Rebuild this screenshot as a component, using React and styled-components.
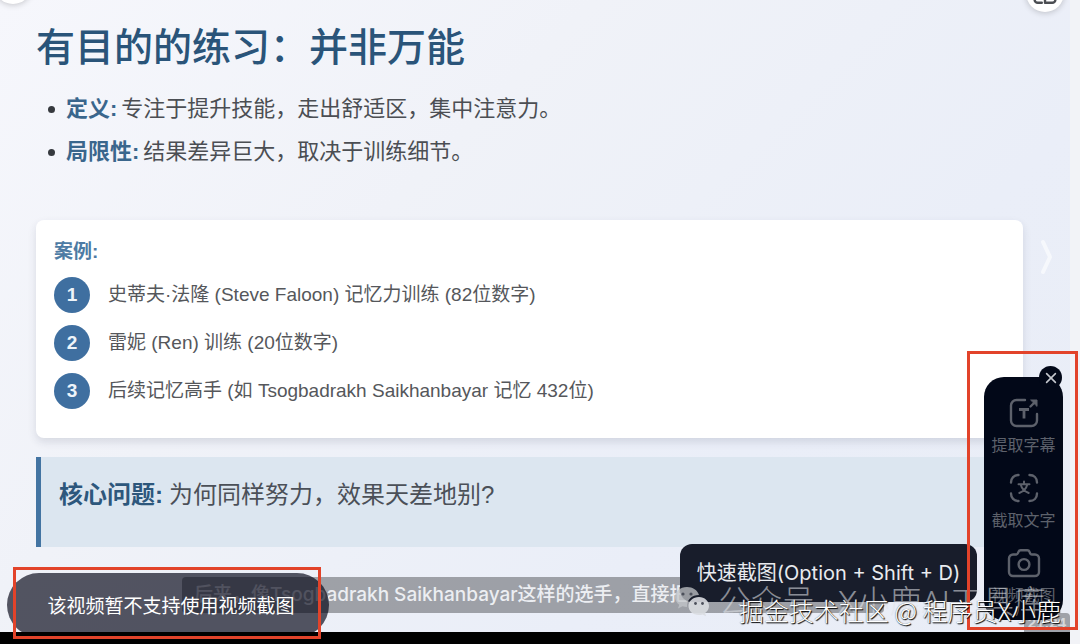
import React from "react";
import styled, { createGlobalStyle } from "styled-components";

const GlobalStyle = createGlobalStyle`
  *, *::before, *::after { box-sizing: border-box; }
  body {
    margin: 0;
    background: #f2f3f7;
    font-family: "Liberation Sans", "Noto Sans CJK SC", sans-serif;
  }
  h1, h2, p, ul, ol { margin: 0; padding: 0; }
`;

const Page = styled.div`
  position: relative;
  display: flex;
  flex-direction: column;
  min-height: 100vh;
  padding-right: 10px;
  overflow: hidden;
`;

const Slide = styled.main`
  position: relative;
  flex: 1;
  padding: 26px 47px 84px 36px;
  overflow: hidden;
  background: linear-gradient(135deg, #f6f7fc 0%, #f0f2f8 35%, #eaeef8 70%, #e9edf6 100%);
`;

const Title = styled.h1`
  margin-bottom: 23px;
  font-size: 39px;
  line-height: 44px;
  font-weight: 500;
  color: #2a5479;
  white-space: nowrap;
`;

const Points = styled.ul`
  display: flex;
  flex-direction: column;
  gap: 11px;
  margin-bottom: 52px;
  list-style: none;
`;

const Point = styled.li`
  display: flex;
  align-items: center;
  font-size: 22px;
  line-height: 32px;
  color: #4b4e53;
  white-space: nowrap;

  &::before {
    content: "";
    width: 7px;
    height: 7px;
    margin: 0 11px 0 12px;
    border-radius: 50%;
    background: #36393e;
  }
`;

const Term = styled.strong`
  margin-right: ${(p) => p.$gap || 4}px;
  font-weight: 700;
  color: ${(p) => p.$color || "#3a668c"};
`;

const Card = styled.section`
  padding: 18px 18px 29px;
  border-radius: 8px;
  background: #fff;
  box-shadow: 0 4px 8px rgba(40, 50, 80, 0.13);
`;

const CardTitle = styled.h2`
  margin-bottom: 11px;
  font-size: 19px;
  line-height: 28px;
  font-weight: 700;
  color: #4d7ba4;
`;

const Cases = styled.ol`
  display: flex;
  flex-direction: column;
  gap: 12px;
  list-style: none;
`;

const Case = styled.li`
  display: flex;
  align-items: center;
  gap: 18px;
  font-size: 19px;
  line-height: 28px;
  color: #55575b;
  white-space: nowrap;
`;

const Number = styled.span`
  display: grid;
  place-items: center;
  width: 36px;
  height: 36px;
  border-radius: 50%;
  background: #3f6fa0;
  color: #eef4fa;
  font-size: 19px;
  font-weight: 700;
`;

const Callout = styled.section`
  margin-top: 19px;
  padding: 22px 18px 36px;
  border-left: 5px solid #4374a2;
  background: #dce6f0;
  font-size: 24px;
  line-height: 32px;
  color: #4b5058;
  white-space: nowrap;
`;

const ControlBar = styled.footer`
  height: 12px;
  background: #000;
`;

const RoundButton = styled.button`
  position: absolute;
  top: ${(p) => (p.$side === "left" ? "-34px" : "-26px")};
  ${(p) => p.$side}: ${(p) => (p.$side === "left" ? "-6px" : "6px")};
  display: grid;
  place-items: end center;
  width: 38px;
  height: 38px;
  padding: 0 0 6px;
  border: 0;
  border-radius: 50%;
  background: #fff;
  color: #4a4d52;
  box-shadow: 0 1px 6px rgba(0, 0, 0, 0.2);
`;

const NextButton = styled.button`
  position: absolute;
  top: 238px;
  right: 13px;
  padding: 0;
  border: 0;
  background: none;
  color: #f6f8fc;
  line-height: 0;
`;

const Caption = styled.p`
  position: absolute;
  left: 182px;
  bottom: 19px;
  width: 702px;
  height: 36px;
  padding: 0 12px;
  overflow: hidden;
  border-radius: 4px;
  background: rgba(80, 82, 86, 0.5);
  color: #eceef2;
  font-family: Inter, "Noto Sans CJK SC", sans-serif;
  font-size: 19px;
  line-height: 36px;
  font-weight: 500;
  white-space: nowrap;
`;

const TimeTag = styled.span`
  position: absolute;
  right: 0;
  bottom: 0;
  padding: 0 4px;
  border-radius: 4px 4px 0 0;
  background: rgba(110, 112, 118, 0.6);
  color: #d6d8dc;
  font-size: 15px;
  line-height: 19px;
  font-weight: 700;
`;

const Toast = styled.div`
  position: absolute;
  left: 7px;
  bottom: -5px;
  display: grid;
  place-items: center;
  width: 322px;
  height: 64px;
  padding: 3px 0 0 6px;
  border-radius: 32px;
  background: rgba(0, 2, 18, 0.66);
  color: #fff;
  font-size: 19px;
  line-height: 28px;
  white-space: nowrap;
`;

const Tooltip = styled.div`
  position: absolute;
  right: 103px;
  bottom: 42px;
  display: grid;
  place-items: center;
  width: 297px;
  height: 58px;
  border-radius: 12px;
  background: #181d2b;
  color: #e9ebef;
  font-family: Inter, "Noto Sans CJK SC", sans-serif;
  font-size: 20px;
  line-height: 28px;
  white-space: nowrap;
`;

const Tools = styled.nav`
  position: absolute;
  right: 17px;
  bottom: 24px;
  display: flex;
  flex-direction: column;
  gap: 17px;
  width: 79px;
  padding: 21px 0 14px;
  border-radius: 20px;
  background: #020818;
`;

const Tool = styled.button`
  display: flex;
  flex-direction: column;
  align-items: center;
  gap: 8px;
  padding: 0;
  border: 0;
  background: none;
  color: #5d616b;
  font-family: inherit;
  font-size: 16px;
  line-height: 20px;
  white-space: nowrap;
`;

const CloseButton = styled.button`
  position: absolute;
  top: -11px;
  right: 1px;
  display: grid;
  place-items: center;
  width: 23px;
  height: 23px;
  padding: 0;
  border: 0;
  border-radius: 50%;
  background: #020818;
  color: #c5c8ce;
`;

const AccountMark = styled.div`
  position: absolute;
  right: 34px;
  bottom: 22px;
  display: flex;
  align-items: center;
  gap: 8px;
  color: rgba(225, 228, 233, 0.58);
  font-family: Roboto, "Noto Sans CJK SC", sans-serif;
  font-size: 32px;
  line-height: 40px;
  font-weight: 300;
  white-space: nowrap;
  pointer-events: none;
`;

const CommunityMark = styled.div`
  position: absolute;
  right: 19px;
  bottom: 18px;
  color: #fff;
  font-family: "Noto Sans CJK SC", sans-serif;
  font-size: 25px;
  line-height: 32px;
  font-weight: 300;
  text-shadow: 1px 1px 1px #000, 0 0 1px #555;
  white-space: nowrap;
  pointer-events: none;
`;

const Highlight = styled.div`
  position: absolute;
  ${(p) => p.$side}: ${(p) => p.$inset}px;
  bottom: ${(p) => p.$bottom}px;
  width: ${(p) => p.$width}px;
  height: ${(p) => p.$height}px;
  border: 3px solid #e2432a;
  pointer-events: none;
`;

const Icon = ({ size = 30, width = 2.4, children }) => (
  <svg
    width={size}
    height={size}
    viewBox="0 0 30 30"
    fill="none"
    stroke="currentColor"
    strokeWidth={width}
    strokeLinecap="round"
    strokeLinejoin="round"
    aria-hidden="true"
  >
    {children}
  </svg>
);

const SubtitleIcon = () => (
  <Icon>
    <path d="M16 2H7.500A5.500 5.500 0 0 0 2 7.500v15A5.500 5.500 0 0 0 7.500 28h15a5.500 5.500 0 0 0 5.500-5.500V16" />
    <path d="M10 11.500h10M15 11.500v9" strokeLinecap="butt" strokeWidth="2.800" />
    <path d="M21.500 8.500l4-4" />
    <path d="M22 2h6v6z" fill="currentColor" strokeWidth="1" />
  </Icon>
);

const TextScanIcon = () => (
  <Icon>
    <path d="M2 9.500C2 5 5 2 9.500 2M20.500 2C25 2 28 5 28 9.500M28 20.500c0 4.500-3 7.500-7.500 7.500M9.500 28C5 28 2 25 2 20.500" />
    <path d="M15 8.500v2.500M9.500 11.300h11M18.300 11.500c-1 4-4 7-8 8.500M11.700 11.500c1 4 4 7 8 8.500" strokeWidth="2" />
  </Icon>
);

const CameraIcon = () => (
  <svg width="34" height="30" viewBox="0 0 34 30" fill="none" stroke="currentColor" strokeWidth="2.400" strokeLinejoin="round" aria-hidden="true">
    <path d="M6 6.500h3.200c.8 0 1.300-.4 1.600-1.100l.7-1.600c.4-1 1-1.500 2.100-1.500h6.800c1.100 0 1.700.5 2.100 1.500l.7 1.600c.3.7.8 1.100 1.600 1.100H28a4 4 0 0 1 4 4V24a4 4 0 0 1-4 4H6a4 4 0 0 1-4-4V10.500a4 4 0 0 1 4-4z" />
    <circle cx="17" cy="16.500" r="5.400" />
  </svg>
);

const WechatIcon = () => (
  <svg width="36" height="32" viewBox="0 0 36 32" aria-hidden="true">
    <path fill="#c3c5ca" fillOpacity="0.75" d="M13 1C6 1 1 5.500 1 11c0 3.200 1.600 5.800 4.200 7.700L4 22.500l4.500-2.200c1.500.4 3 .7 4.500.7C12.500 13.500 18 9 25 9 23.500 4.200 18.800 1 13 1z" />
    <path fill="#d9dbe0" fillOpacity="0.9" d="M25 11c-6 0-10.500 4-10.500 9S19 29 25 29c1.300 0 2.500-.2 3.700-.6L32 30.200l-.9-3.200c2.400-1.700 3.900-4.100 3.900-7 0-5-4.300-9-10-9z" />
    <g fill="#4c505b">
      <circle cx="9" cy="8" r="1.600" />
      <circle cx="17" cy="8" r="1.600" />
      <circle cx="21.500" cy="17.500" r="1.400" />
      <circle cx="28.500" cy="17.500" r="1.400" />
    </g>
  </svg>
);

const cases = [
  "史蒂夫·法隆 (Steve Faloon) 记忆力训练 (82位数字)",
  "雷妮 (Ren) 训练 (20位数字)",
  "后续记忆高手 (如 Tsogbadrakh Saikhanbayar 记忆 432位)",
];

const tools = [
  { label: "提取字幕", icon: <SubtitleIcon /> },
  { label: "截取文字", icon: <TextScanIcon /> },
  { label: "视频截图", icon: <CameraIcon /> },
];

export default function App() {
  return (
    <Page>
      <GlobalStyle />
      <Slide>
        <Title>有目的的练习：并非万能</Title>
        <Points>
          <Point>
            <Term>定义:</Term>专注于提升技能，走出舒适区，集中注意力。
          </Point>
          <Point>
            <Term>局限性:</Term>结果差异巨大，取决于训练细节。
          </Point>
        </Points>
        <Card>
          <CardTitle>案例:</CardTitle>
          <Cases>
            {cases.map((text, i) => (
              <Case key={text}>
                <Number>{i + 1}</Number>
                {text}
              </Case>
            ))}
          </Cases>
        </Card>
        <Callout>
          <Term $color="#2d577c" $gap={6}>核心问题:</Term>为何同样努力，效果天差地别?
        </Callout>

        <RoundButton $side="left" aria-label="返回" />
        <RoundButton $side="right" aria-label="画中画">
          <Icon size={24} width={3}>
            <path d="M2 14v8a4 4 0 0 0 4 4h5M17 26h7a4 4 0 0 0 4-4v-6h-8M15 20v6" />
          </Icon>
        </RoundButton>
        <NextButton aria-label="下一页">
          <svg width="20" height="38" viewBox="0 0 20 38" fill="none" stroke="currentColor" strokeWidth="4" strokeLinecap="round" strokeLinejoin="round">
            <path d="M6 4l7 15-7 15" />
          </svg>
        </NextButton>
        <Caption>后来，像Tsogbadrakh Saikhanbayar这样的选手，直接把</Caption>
        <TimeTag>21:24</TimeTag>
        <Toast role="status">该视频暂不支持使用视频截图</Toast>
      </Slide>
      <ControlBar />

      <Tooltip role="tooltip">快速截图(Option + Shift + D)</Tooltip>
      <Tools aria-label="视频工具">
        {tools.map((tool) => (
          <Tool key={tool.label} type="button">
            {tool.icon}
            {tool.label}
          </Tool>
        ))}
        <CloseButton type="button" aria-label="关闭">
          <Icon size={12} width={4}>
            <path d="M4 4l22 22M26 4L4 26" />
          </Icon>
        </CloseButton>
      </Tools>
      <AccountMark>
        <WechatIcon />
        公众号 · X小鹿AI工具库
      </AccountMark>
      <Highlight $side="right" $inset={2} $bottom={14} $width={111} $height={279} />
      <Highlight $side="left" $inset={13} $bottom={5} $width={308} $height={72} />
      <CommunityMark>掘金技术社区 @ 程序员X小鹿</CommunityMark>
    </Page>
  );
}
